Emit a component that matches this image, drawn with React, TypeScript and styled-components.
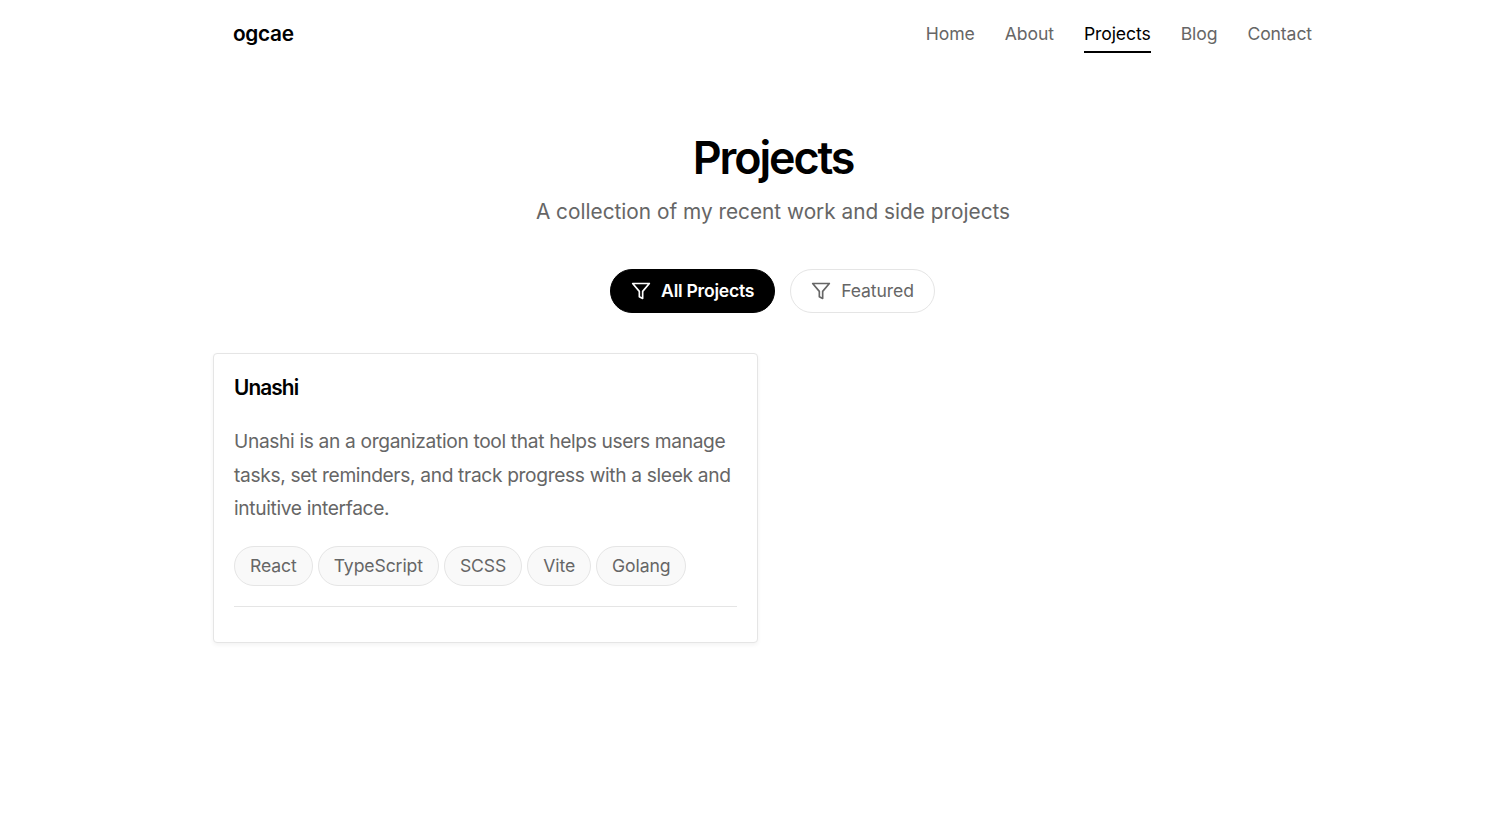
import React from "react";
import styled, { createGlobalStyle } from "styled-components";

const Global = createGlobalStyle`
  html, body { margin: 0; padding: 0; background: #fff; }
  body { font-family: Inter, "Liberation Sans", sans-serif; color: #666; }
  * { box-sizing: border-box; }
`;

const Page = styled.div`
  width: 1120px;
  margin-left: 213px;
  min-height: 821px;
`;

const Header = styled.header`
  height: 68px;
  padding: 0 20px;
  display: flex;
  align-items: center;
  justify-content: space-between;
`;

const Logo = styled.a`
  font-size: 20.8px;
  font-weight: 600;
  letter-spacing: -0.3px;
  padding-bottom: 2px;
  color: #000;
`;

const Nav = styled.nav`
  display: flex;
  gap: 30px;
  margin-right: 1px;
  padding-top: 5px;
`;

const NavLink = styled.a<{ $active?: boolean }>`
  font-size: 17.6px;
  line-height: 27px;
  padding-bottom: 4px;
  color: ${(p) => (p.$active ? "#000" : "#666")};
  border-bottom: 2px solid ${(p) => (p.$active ? "#000" : "transparent")};
  letter-spacing: -0.1px;
`;

const Hero = styled.section`
  padding-top: 63px;
  text-align: center;
`;

const Title = styled.h1`
  margin: 0;
  font-size: 44.8px;
  line-height: 54px;
  font-weight: 600;
  letter-spacing: -2.1px;
  color: #000;
`;

const Subtitle = styled.p`
  margin: 11px 0 0;
  font-size: 20.8px;
  line-height: 32px;
  color: #666;
`;

const Filters = styled.div`
  margin-top: 41px;
  padding-right: 1px;
  display: flex;
  justify-content: center;
  gap: 15px;
`;

const FilterButton = styled.button<{ $active?: boolean }>`
  height: 44px;
  padding: 0 20px 1px;
  display: flex;
  align-items: center;
  gap: 10px;
  border-radius: 22px;
  font-family: inherit;
  font-size: 17.6px;
  font-weight: ${(p) => (p.$active ? 600 : 400)};
  letter-spacing: ${(p) => (p.$active ? "-0.25px" : "-0.1px")};
  color: ${(p) => (p.$active ? "#fff" : "#666")};
  background: ${(p) => (p.$active ? "#000" : "#fff")};
  border: 1px solid ${(p) => (p.$active ? "#000" : "#e5e5e5")};
`;

const Grid = styled.div`
  margin-top: 40px;
  display: grid;
  grid-template-columns: repeat(2, 545px);
  gap: 30px;
`;

const Card = styled.article`
  height: 290px;
  padding: 20px;
  background: #fff;
  border: 1px solid #e5e5e5;
  border-radius: 4px;
  box-shadow: 0 2px 4px rgba(0, 0, 0, 0.05);
`;

const CardTitle = styled.h2`
  margin: 0;
  font-size: 20.8px;
  line-height: 27px;
  font-weight: 600;
  letter-spacing: -0.9px;
  color: #000;
`;

const CardText = styled.p`
  margin: 24px 0 0;
  font-size: 19.2px;
  line-height: 33.6px;
  letter-spacing: -0.35px;
  color: #666;
`;

const Tags = styled.div`
  margin-top: 20px;
  display: flex;
  gap: 5px;
`;

const Tag = styled.span`
  height: 40px;
  padding: 0 15px;
  display: flex;
  align-items: center;
  font-size: 17.6px;
  letter-spacing: -0.1px;
  color: #666;
  background: #f9f9f9;
  border: 1px solid #e5e5e5;
  border-radius: 20px;
`;

const Rule = styled.hr`
  margin: 20px 0 0;
  border: 0;
  border-top: 1px solid #e5e5e5;
`;

const FilterIcon = () => (
  <svg width="20" height="20" viewBox="0 0 24 24" fill="none" stroke="currentColor" strokeWidth="2" strokeLinecap="round" strokeLinejoin="round">
    <polygon points="22 3 2 3 10 12.46 10 19 14 21 14 12.46 22 3" />
  </svg>
);

const links = ["Home", "About", "Projects", "Blog", "Contact"];
const tags = ["React", "TypeScript", "SCSS", "Vite", "Golang"];

export default function App() {
  return (
    <Page>
      <Global />
      <Header>
        <Logo>ogcae</Logo>
        <Nav>
          {links.map((l) => (
            <NavLink key={l} $active={l === "Projects"}>{l}</NavLink>
          ))}
        </Nav>
      </Header>
      <Hero>
        <Title>Projects</Title>
        <Subtitle>A collection of my recent work and side projects</Subtitle>
        <Filters>
          <FilterButton $active><FilterIcon />All Projects</FilterButton>
          <FilterButton><FilterIcon />Featured</FilterButton>
        </Filters>
      </Hero>
      <Grid>
        <Card>
          <CardTitle>Unashi</CardTitle>
          <CardText>
            Unashi is an a organization tool that helps users manage tasks, set reminders, and track progress with a sleek and intuitive interface.
          </CardText>
          <Tags>
            {tags.map((t) => <Tag key={t}>{t}</Tag>)}
          </Tags>
          <Rule />
        </Card>
      </Grid>
    </Page>
  );
}
